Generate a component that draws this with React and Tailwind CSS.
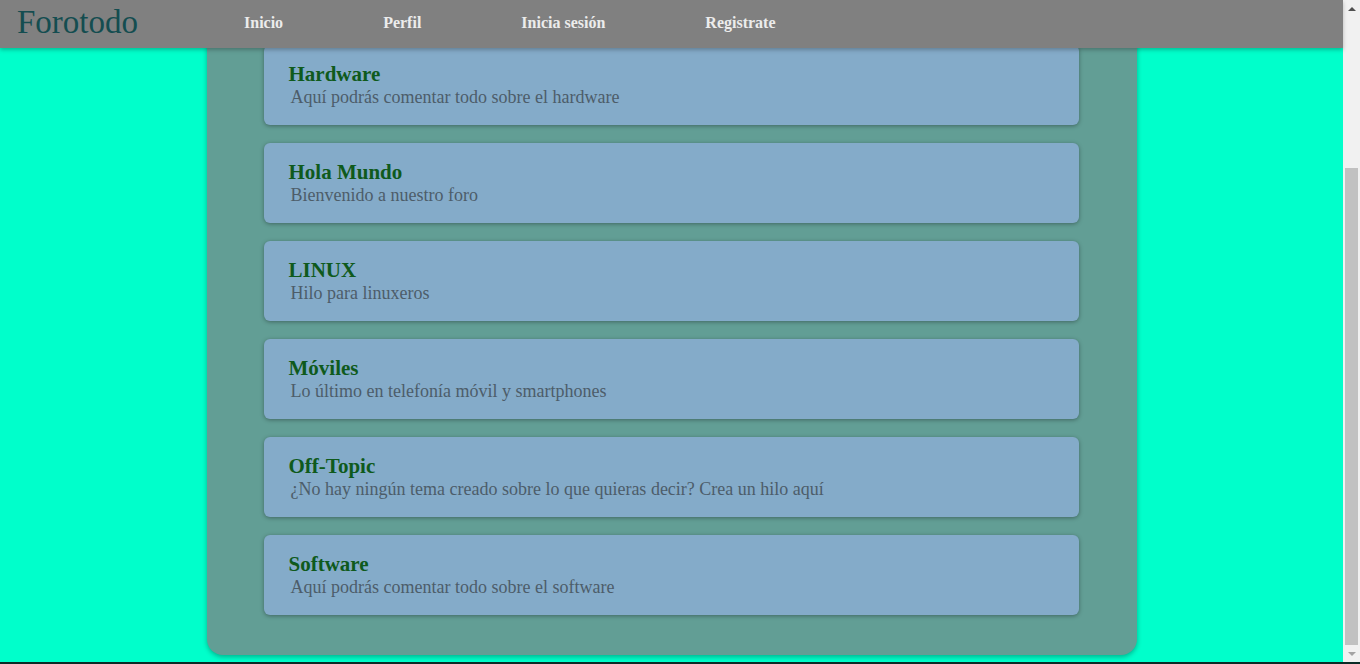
import { useLayoutEffect, useRef } from 'react';

const foros = [
  { title: 'Hardware', desc: 'Aquí podrás comentar todo sobre el hardware' },
  { title: 'Hola Mundo', desc: 'Bienvenido a nuestro foro' },
  { title: 'LINUX', desc: 'Hilo para linuxeros' },
  { title: 'Móviles', desc: 'Lo último en telefonía móvil y smartphones' },
  { title: 'Off-Topic', desc: '¿No hay ningún tema creado sobre lo que quieras decir? Crea un hilo aquí' },
  { title: 'Software', desc: 'Aquí podrás comentar todo sobre el software' },
];

const navItems = ['Inicio', 'Perfil', 'Inicia sesión', 'Registrate'];

const serif = { fontFamily: '"Liberation Serif", "Times New Roman", serif' };

// Fake classic scrollbar, drawn at the right edge
const Scrollbar = () => (
  <div className="w-[17px] bg-[#f1f1f1] flex flex-col items-center">
    <div className="h-[17px] flex items-center justify-center">
      <div className="w-0 h-0 border-x-[4px] border-x-transparent border-b-[4px] border-b-[#505050]" />
    </div>
    <div className="flex-1 w-full px-[2px] flex flex-col">
      <div className="h-[151px]" />
      <div className="flex-1 bg-[#c1c1c1]" />
    </div>
    <div className="h-[17px] flex items-center justify-center">
      <div className="w-0 h-0 border-x-[4px] border-x-transparent border-t-[4px] border-t-[#a3a3a3]" />
    </div>
  </div>
);

const App = () => {
  const scrollRef = useRef(null);

  useLayoutEffect(() => {
    if (scrollRef.current) scrollRef.current.scrollTop = scrollRef.current.scrollHeight;
  }, []);

  return (
    <div className="h-[664px] flex flex-col overflow-hidden" style={serif}>
      <div className="flex flex-1 min-h-0">
        <div className="relative flex-1 min-w-0">
          {/* Header */}
          <header className="absolute inset-x-0 top-0 z-10 h-12 bg-[#808080] shadow-[0_2px_4px_rgba(0,0,0,0.25)] flex items-center pb-[3px]">
            <div className="w-[244px] pl-[17px]">
              <span className="text-[33px] leading-none text-[#144d50]">Forotodo</span>
            </div>
            <nav className="flex gap-[100px]">
              {navItems.map((item) => (
                <a key={item} className="text-[16px] font-bold text-[#ececec] cursor-pointer">
                  {item}
                </a>
              ))}
            </nav>
          </header>

          {/* Scrolled content */}
          <div ref={scrollRef} className="h-full overflow-hidden bg-[#00ffcb]">
            <div className="pt-[21px] pb-[7px]">
              <main className="w-[930px] mx-auto pt-[100px] pb-10 pl-[57px] pr-[58px] bg-[#629e95] rounded-b-2xl shadow-[0_2px_5px_rgba(0,0,0,0.3)] flex flex-col gap-[18px]">
                {foros.map((foro) => (
                  <div
                    key={foro.title}
                    className="h-20 bg-[#84abc9] rounded-md shadow-[0_1px_4px_rgba(0,0,0,0.35)] pt-[17px] pl-[25px]"
                  >
                    <h3 className="text-[21px] leading-[24px] font-bold text-[#0f5a1c]">{foro.title}</h3>
                    <p className="mt-[1px] text-[18px] leading-[21px] text-[#4d5d6a] pl-[2px]">{foro.desc}</p>
                  </div>
                ))}
              </main>
            </div>
          </div>
        </div>
        <Scrollbar />
      </div>
      <div className="h-[2px] bg-[#0b2c27]" />
    </div>
  );
};

export default App;
